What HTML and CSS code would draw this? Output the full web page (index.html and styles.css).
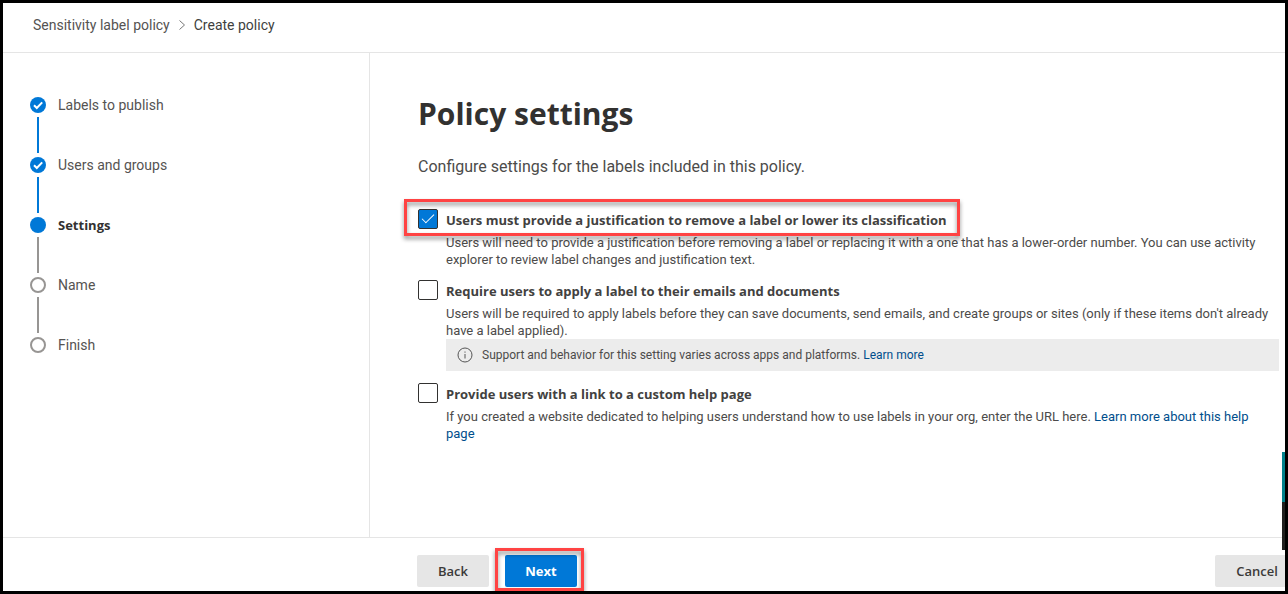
FILE: index.html
```html
<!DOCTYPE html>
<html lang="en">
<head>
<meta charset="utf-8">
<meta name="viewport" content="width=device-width, initial-scale=1">
<title>Create policy</title>
<link rel="stylesheet" href="styles.css">
</head>
<body>
<div class="frame">
  <header class="topbar">
    <nav class="breadcrumb" aria-label="Breadcrumb">
      <a class="crumb" href="#">Sensitivity label policy</a>
      <svg class="chevron" viewBox="0 0 8 12" aria-hidden="true"><path d="M1.5 1.5 6.5 6l-5 4.5"/></svg>
      <span class="crumb crumb-current">Create policy</span>
    </nav>
  </header>

  <div class="content">
    <nav class="sidebar" aria-label="Steps">
      <ol class="steps">
        <li class="step step-done">
          <span class="track"><svg class="dot" viewBox="0 0 16 16" aria-hidden="true"><circle cx="8" cy="8" r="8"/><path d="M4 8.2 6.8 11 12.2 5.4"/></svg></span>
          <span class="step-name">Labels to publish</span>
        </li>
        <li class="step step-done">
          <span class="track"><svg class="dot" viewBox="0 0 16 16" aria-hidden="true"><circle cx="8" cy="8" r="8"/><path d="M4 8.2 6.8 11 12.2 5.4"/></svg></span>
          <span class="step-name">Users and groups</span>
        </li>
        <li class="step step-current" aria-current="step">
          <span class="track"><svg class="dot" viewBox="0 0 16 16" aria-hidden="true"><circle cx="8" cy="8" r="8"/></svg></span>
          <span class="step-name">Settings</span>
        </li>
        <li class="step">
          <span class="track"><svg class="dot" viewBox="0 0 16 16" aria-hidden="true"><circle cx="8" cy="8" r="7"/></svg></span>
          <span class="step-name">Name</span>
        </li>
        <li class="step">
          <span class="track"><svg class="dot" viewBox="0 0 16 16" aria-hidden="true"><circle cx="8" cy="8" r="7"/></svg></span>
          <span class="step-name">Finish</span>
        </li>
      </ol>
    </nav>

    <main class="main">
      <h1 class="title">Policy settings</h1>
      <p class="intro">Configure settings for the labels included in this policy.</p>
      <div class="options">
        <section class="option">
          <div class="option-head callout">
            <input class="check" type="checkbox" id="justify" checked>
            <label class="option-label" for="justify">Users must provide a justification to remove a label or lower its classification</label>
          </div>
          <p class="option-text">Users will need to provide a justification before removing a label or replacing it with a one that has a lower-order number. You can use activity explorer to review label changes and justification text.</p>
        </section>
        <section class="option">
          <div class="option-head">
            <input class="check" type="checkbox" id="require">
            <label class="option-label" for="require">Require users to apply a label to their emails and documents</label>
          </div>
          <p class="option-text">Users will be required to apply labels before they can save documents, send emails, and create groups or sites (only if these items don't already have a label applied).</p>
          <div class="notice">
            <svg class="info" viewBox="0 0 16 16" aria-hidden="true"><circle cx="8" cy="8" r="7"/><path d="M8 7v4.5M8 4.5v1.2"/></svg>
            <span>Support and behavior for this setting varies across apps and platforms. <a class="link" href="#">Learn more</a></span>
          </div>
        </section>
        <section class="option">
          <div class="option-head">
            <input class="check" type="checkbox" id="help">
            <label class="option-label" for="help">Provide users with a link to a custom help page</label>
          </div>
          <p class="option-text">If you created a website dedicated to helping users understand how to use labels in your org, enter the URL here. <a class="link" href="#">Learn more about this help page</a></p>
        </section>
      </div>
    </main>
  </div>

  <footer class="actions">
    <button class="btn" type="button">Back</button>
    <span class="callout callout-next"><button class="btn btn-primary" type="button">Next</button></span>
    <button class="btn btn-cancel" type="button">Cancel</button>
  </footer>
  <div class="edge-tabs"></div>
</div>
</body>
</html>
```
FILE: styles.css
```css
* {
  box-sizing: border-box;
}

body {
  margin: 0;
  background: #fff;
  color: #4c4b4a;
  font: 13px/17px Roboto, "Open Sans", sans-serif;
}

.frame {
  position: relative;
  display: flex;
  flex-direction: column;
  min-height: 100vh;
  border: 3px solid #000;
  overflow: hidden;
}

.topbar {
  padding: 13px 30px 18px;
  border-bottom: 1px solid #e5e5e5;
}

.breadcrumb {
  display: flex;
  align-items: center;
  gap: 8px;
  font-size: 14px;
  line-height: 18px;
}

.crumb {
  color: #555352;
  text-decoration: none;
}

.crumb-current {
  color: #403f3e;
}

.chevron {
  width: 8px;
  height: 12px;
  fill: none;
  stroke: #777;
}

.content {
  display: flex;
  flex: 1;
}

.sidebar {
  flex: 0 0 367px;
  padding: 44px 27px;
  border-right: 1px solid #e5e5e5;
}

.steps {
  margin: 0;
  padding: 0;
  list-style: none;
}

.step {
  display: flex;
  gap: 12px;
  height: 60px;
  color: #555352;
  font-size: 14px;
  line-height: 17px;
}

.track {
  display: flex;
  flex-direction: column;
  align-items: center;
  gap: 4px;
}

.step:not(:last-child) .track::after {
  content: "";
  width: 2px;
  height: 36px;
  background: #979593;
}

.step-done:not(:last-child) .track::after {
  background: #0078d7;
}

.dot {
  width: 16px;
  height: 16px;
}

.dot circle {
  fill: #fff;
  stroke: #979593;
  stroke-width: 2;
}

.step-done circle,
.step-current circle {
  fill: #0078d7;
  stroke: none;
}

.dot path {
  fill: none;
  stroke: #fff;
  stroke-width: 2;
}

.step-current .step-name {
  color: #323130;
  font-family: "Open Sans", "Noto Sans", sans-serif;
  font-size: 13px;
  font-weight: 700;
}

.main {
  flex: 1;
  min-width: 0;
  padding: 40px 6px 40px 48px;
}

.title {
  margin: 0;
  color: #323130;
  font-family: "Open Sans", "Noto Sans", sans-serif;
  font-size: 30px;
  line-height: 42px;
  font-weight: 700;
}

.intro {
  margin: 21px 0 31px;
  font-size: 16px;
  line-height: 22px;
}

.options {
  display: grid;
  gap: 12px;
}

.option-head {
  display: flex;
  align-items: flex-start;
  gap: 8px;
  width: fit-content;
}

.option-label {
  color: #424140;
  font-family: "Open Sans", "Noto Sans", sans-serif;
  font-weight: 700;
  line-height: 22px;
}

.check {
  appearance: none;
  display: grid;
  place-items: center;
  flex: none;
  width: 20px;
  height: 20px;
  margin: 0;
  border: 1px solid #323130;
  border-radius: 2px;
  background: #fff;
}

.check:checked {
  background: #0078d7;
}

.check:checked::after {
  content: "";
  width: 11px;
  height: 5px;
  border: solid #fff;
  border-width: 0 0 1px 1px;
  transform: translateY(-2px) rotate(-45deg);
}

.option-text {
  margin: 3px 0 0 28px;
}

.notice {
  display: flex;
  align-items: center;
  gap: 9px;
  min-height: 32px;
  margin-left: 28px;
  padding: 0 11px;
  background: #ececec;
  font-size: 12px;
}

.info {
  width: 16px;
  height: 16px;
  fill: none;
  stroke: #555;
}

.link {
  color: #004e8c;
  text-decoration: none;
}

.callout {
  position: relative;
}

.callout::after {
  content: "";
  position: absolute;
  inset: -10px -14px -5px -14px;
  border: 3px solid #ff4343;
  filter: drop-shadow(0 3px 2px rgba(0, 0, 0, 0.45));
  pointer-events: none;
}

.callout-next::after {
  inset: -7px -7px -4px -10px;
}

.actions {
  display: flex;
  gap: 16px;
  padding: 17px 0 4px 414px;
  border-top: 1px solid #e5e5e5;
}

.btn {
  display: block;
  min-width: 72px;
  height: 32px;
  padding: 0 12px;
  border: 0;
  border-radius: 2px;
  background: #e6e6e6;
  color: #3b3a39;
  font: 600 13px/18px "Open Sans", "Noto Sans", sans-serif;
}

.btn-primary {
  background: #0078d7;
  color: #fff;
  font-weight: 700;
}

.btn-cancel {
  width: 84px;
  margin-left: auto;
  margin-right: -14px;
}

.edge-tabs {
  position: absolute;
  right: 0;
  bottom: 41px;
  width: 3px;
  height: 98px;
  background: linear-gradient(#00828c 50px, #201f1e 50px);
}
```
